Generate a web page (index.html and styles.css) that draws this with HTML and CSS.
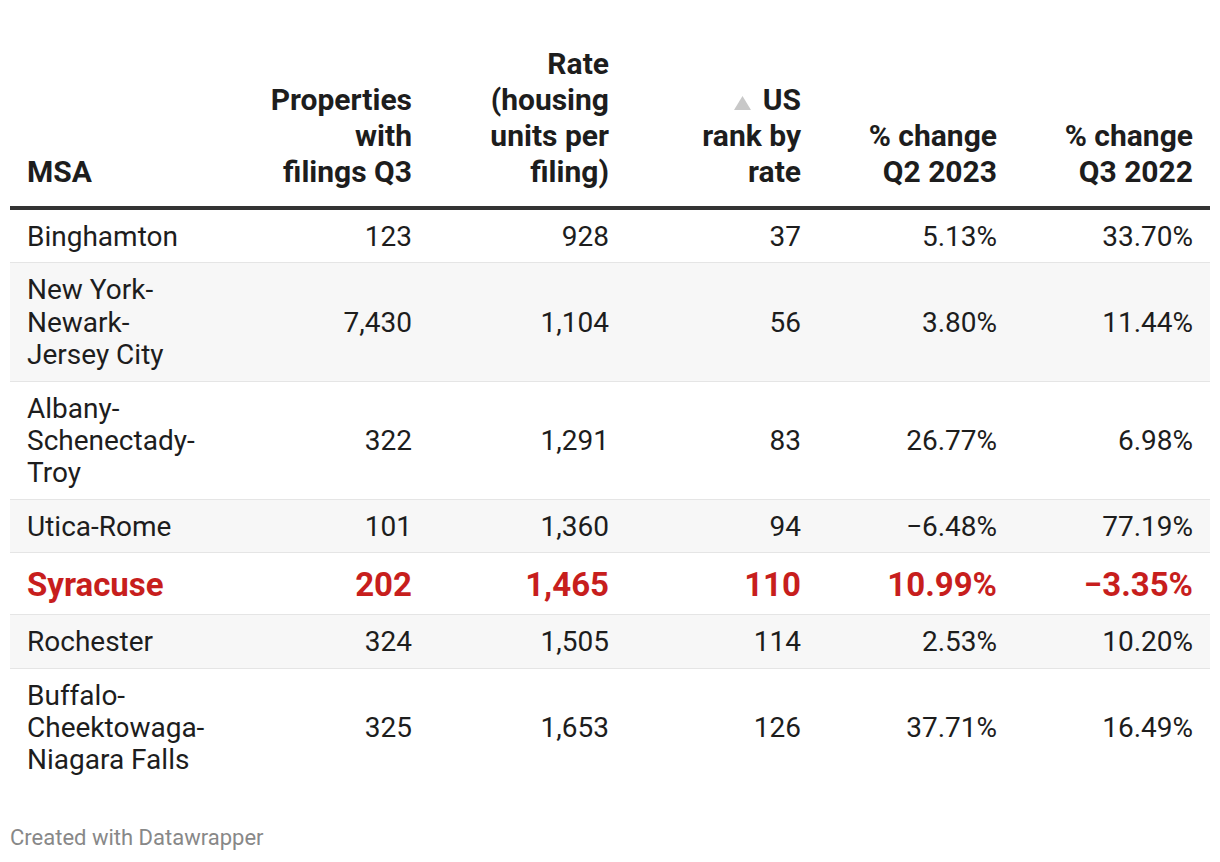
FILE: index.html
```html
<!DOCTYPE html>
<html lang="en">
<head>
<meta charset="utf-8">
<title>Foreclosure filings by MSA</title>
<link rel="stylesheet" href="styles.css">
</head>
<body>
<div class="chart">
  <table class="dw-table">
    <colgroup>
      <col class="c-msa">
      <col class="c-prop">
      <col class="c-rate">
      <col class="c-rank">
      <col class="c-q2">
      <col class="c-q3">
    </colgroup>
    <thead>
      <tr>
        <th class="left">MSA</th>
        <th>Properties<br>with<br>filings Q3</th>
        <th>Rate<br>(housing<br>units per<br>filing)</th>
        <th><svg class="sort" width="17" height="14" viewBox="0 0 17 14" aria-hidden="true"><polygon points="8.5,0 17,14 0,14" fill="#c8c8c8"/></svg>US<br>rank by<br>rate</th>
        <th>% change<br>Q2 2023</th>
        <th>% change<br>Q3 2022</th>
      </tr>
    </thead>
    <tbody>
      <tr>
        <td class="left">Binghamton</td><td>123</td><td>928</td><td>37</td><td>5.13%</td><td>33.70%</td>
      </tr>
      <tr class="alt">
        <td class="left">New York-<br>Newark-<br>Jersey City</td><td>7,430</td><td>1,104</td><td>56</td><td>3.80%</td><td>11.44%</td>
      </tr>
      <tr>
        <td class="left">Albany-<br>Schenectady-<br>Troy</td><td>322</td><td>1,291</td><td>83</td><td>26.77%</td><td>6.98%</td>
      </tr>
      <tr class="alt">
        <td class="left">Utica-Rome</td><td>101</td><td>1,360</td><td>94</td><td>&minus;6.48%</td><td>77.19%</td>
      </tr>
      <tr class="highlight">
        <td class="left">Syracuse</td><td>202</td><td>1,465</td><td>110</td><td>10.99%</td><td>&minus;3.35%</td>
      </tr>
      <tr class="alt">
        <td class="left">Rochester</td><td>324</td><td>1,505</td><td>114</td><td>2.53%</td><td>10.20%</td>
      </tr>
      <tr class="last">
        <td class="left">Buffalo-<br>Cheektowaga-<br>Niagara Falls</td><td>325</td><td>1,653</td><td>126</td><td>37.71%</td><td>16.49%</td>
      </tr>
    </tbody>
  </table>
  <div class="footer">Created with Datawrapper</div>
</div>
</body>
</html>
```

FILE: styles.css
```css
html, body {
  margin: 0;
  padding: 0;
  background: #ffffff;
}

body {
  font-family: Roboto, "Noto Sans", "Liberation Sans", sans-serif;
  color: #1d1d1d;
}

.chart {
  padding: 36px 10px 0 10px;
}

.dw-table {
  width: 1200px;
  border-collapse: collapse;
  table-layout: fixed;
}

.c-msa { width: 230px; }
.c-prop { width: 189px; }
.c-rate { width: 197px; }
.c-rank { width: 192px; }
.c-q2 { width: 196px; }
.c-q3 { width: 196px; }

.dw-table th {
  font-size: 30px;
  line-height: 36px;
  font-weight: 700;
  text-align: right;
  vertical-align: bottom;
  padding: 10px 17px 16px 17px;
  border-bottom: 4px solid #333333;
  color: #1d1d1d;
}

.dw-table td {
  font-size: 28px;
  line-height: 32.4px;
  text-align: right;
  vertical-align: middle;
  padding: 11px 17px 9px 17px;
  border-bottom: 1px solid #e5e5e5;
  color: #1d1d1d;
}

.dw-table .left {
  text-align: left;
}

.dw-table tr.alt td {
  background: #f7f7f7;
}

.dw-table tr.last td {
  border-bottom: none;
}

.dw-table tr.highlight td {
  color: #c71e1d;
  font-weight: 700;
  font-size: 33px;
  line-height: 41px;
}

.sort {
  display: inline-block;
  margin-right: 12px;
  vertical-align: 0;
}

.footer {
  margin-top: 39px;
  font-size: 22px;
  line-height: 26px;
  color: #888888;
}
```
